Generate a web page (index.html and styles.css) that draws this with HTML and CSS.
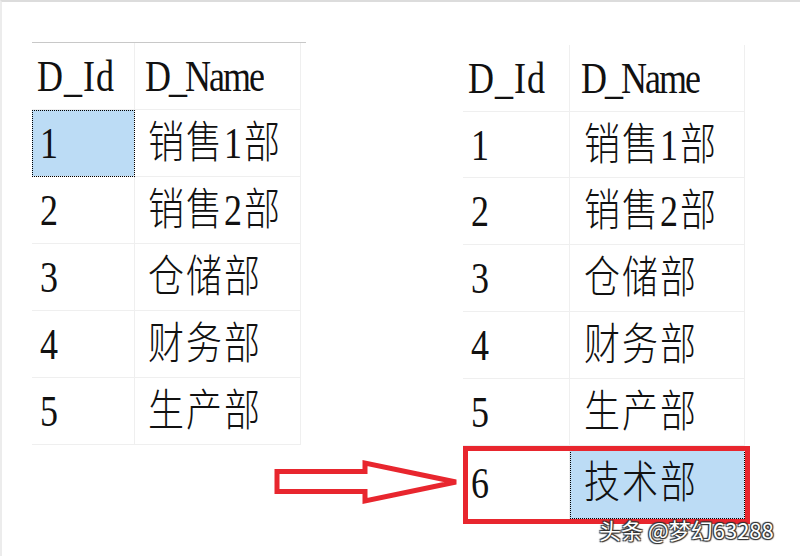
FILE: index.html
```html
<!DOCTYPE html>
<html lang="zh">
<head>
<meta charset="utf-8">
<title>Department tables</title>
<link rel="stylesheet" href="styles.css">
</head>
<body>
<div class="page">
  <div class="grid grid-left">
    <div class="cell c1 head"><span class="txt">D_Id</span></div>
    <div class="cell c2 head"><span class="txt">D_Name</span></div>
    <div class="cell c1 sel"><span class="txt num">1</span></div>
    <div class="cell c2"><span class="txt cn">销售1部</span></div>
    <div class="cell c1"><span class="txt num">2</span></div>
    <div class="cell c2"><span class="txt cn">销售2部</span></div>
    <div class="cell c1"><span class="txt num">3</span></div>
    <div class="cell c2"><span class="txt cn">仓储部</span></div>
    <div class="cell c1"><span class="txt num">4</span></div>
    <div class="cell c2"><span class="txt cn">财务部</span></div>
    <div class="cell c1"><span class="txt num">5</span></div>
    <div class="cell c2"><span class="txt cn">生产部</span></div>
  </div>

  <div class="grid grid-right">
    <div class="cell c1 head"><span class="txt">D_Id</span></div>
    <div class="cell c2 head"><span class="txt">D_Name</span></div>
    <div class="cell c1"><span class="txt num">1</span></div>
    <div class="cell c2"><span class="txt cn">销售1部</span></div>
    <div class="cell c1"><span class="txt num">2</span></div>
    <div class="cell c2"><span class="txt cn">销售2部</span></div>
    <div class="cell c1"><span class="txt num">3</span></div>
    <div class="cell c2"><span class="txt cn">仓储部</span></div>
    <div class="cell c1"><span class="txt num">4</span></div>
    <div class="cell c2"><span class="txt cn">财务部</span></div>
    <div class="cell c1"><span class="txt num">5</span></div>
    <div class="cell c2"><span class="txt cn">生产部</span></div>
    <div class="cell c1 last"><span class="txt num">6</span></div>
    <div class="cell c2 last sel"><span class="txt cn">技术部</span></div>
  </div>

  <div class="highlight"></div>

  <svg class="arrow" width="195" height="55" viewBox="0 0 195 55">
    <polygon points="7,16.5 95,16.5 95,8 186,27 95,46 95,36.5 7,36.5" fill="#fff" stroke="#e8262e" stroke-width="5" stroke-linejoin="miter"/>
  </svg>

  <div class="watermark">头条 @梦幻63288</div>
</div>
</body>
</html>
```

FILE: styles.css
```css
html, body {
  margin: 0;
  padding: 0;
  background: #fff;
}

.page {
  position: relative;
  width: 800px;
  height: 556px;
  box-sizing: border-box;
  border-top: 2px solid #dcdcdc;
  border-left: 2px solid #ececec;
  display: flex;
  align-items: flex-start;
  overflow: hidden;
}

.grid {
  display: grid;
  font-family: "Liberation Serif", "Noto Sans CJK SC", serif;
  font-size: 36px;
  color: #111;
}

.grid-left {
  margin-left: 30px;
  margin-top: 40px;
  grid-template-columns: 103px 166px;
  grid-template-rows: repeat(6, 67px);
  border-top: 1px solid #c8c8c8;
  width: 274px;
}

.grid-right {
  margin-left: 157px;
  margin-top: 43px;
  grid-template-columns: 107px 175px;
  grid-template-rows: 67px 66px 67px 67px 67px 67px 73px;
}

.cell {
  display: flex;
  align-items: center;
  box-sizing: border-box;
  border-bottom: 1px solid #efefef;
  border-right: 1px solid #efefef;
  line-height: 1;
}

.c1 {
  padding-left: 5px;
}

.c2 {
  padding-left: 10px;
}

.grid-right .c2 {
  padding-left: 11px;
}

.txt {
  display: inline-block;
  transform: scaleY(1.22);
  white-space: nowrap;
}

.c1.head .txt {
  letter-spacing: 1px;
}

.c2.head .txt {
  letter-spacing: -2px;
}

.num {
  margin-left: 3px;
}

.cn {
  font-weight: 300;
  letter-spacing: 2px;
  margin-left: 3px;
}

.sel {
  background: #bcdcf5;
  outline: 1px dotted #000;
  outline-offset: -1px;
}

.last {
  border-bottom: none;
}

.highlight {
  position: absolute;
  left: 461px;
  top: 444px;
  width: 287px;
  height: 78px;
  box-sizing: border-box;
  border: 5px solid #e8262e;
}

.arrow {
  position: absolute;
  left: 268px;
  top: 453px;
}

.watermark {
  position: absolute;
  left: 597px;
  top: 514px;
  font-family: "Noto Sans CJK SC", sans-serif;
  font-size: 22px;
  line-height: 26px;
  color: #fff;
  text-shadow: 0 0 1px #333, 1px 1px 1px #333, -1px -1px 1px #333, 1px -1px 1px #333, -1px 1px 1px #333;
  white-space: nowrap;
}
```
